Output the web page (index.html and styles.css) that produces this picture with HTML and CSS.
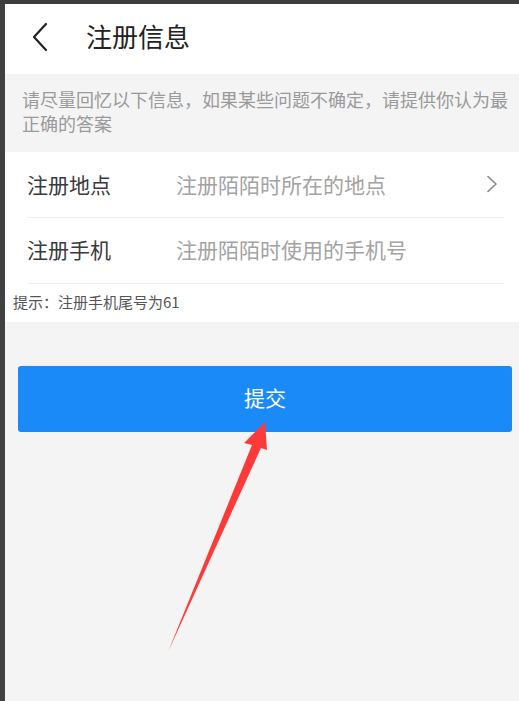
FILE: index.html
```html
<!DOCTYPE html>
<html lang="zh-CN">
<head>
<meta charset="utf-8">
<title>注册信息</title>
<link rel="stylesheet" href="styles.css">
</head>
<body>
<div class="topstrip"></div>
<div class="main">
  <div class="side"></div>
  <div class="screen">
    <header class="header">
      <svg class="back" width="16" height="30" viewBox="0 0 16 30" aria-hidden="true">
        <path d="M14 2 L2 15 L14 28" fill="none" stroke="#222" stroke-width="2.2" stroke-linecap="round" stroke-linejoin="round"/>
      </svg>
      <h1 class="title">注册信息</h1>
    </header>
    <p class="notice">请尽量回忆以下信息，如果某些问题不确定，请提供你认为最正确的答案</p>
    <section class="form">
      <div class="row">
        <span class="label">注册地点</span>
        <span class="placeholder">注册陌陌时所在的地点</span>
        <svg class="chev" width="12" height="18" viewBox="0 0 12 18" aria-hidden="true">
          <path d="M2 1.5 L10 9 L2 16.5" fill="none" stroke="#888" stroke-width="1.6" stroke-linecap="round" stroke-linejoin="round"/>
        </svg>
      </div>
      <div class="row">
        <span class="label">注册手机</span>
        <span class="placeholder">注册陌陌时使用的手机号</span>
      </div>
      <div class="tip">提示：注册手机尾号为61</div>
    </section>
    <div class="actions">
      <button class="submit" type="button">提交</button>
    </div>
  </div>
</div>
<svg class="arrow" width="519" height="701" viewBox="0 0 519 701" aria-hidden="true">
  <polygon points="265,422 244,443 252,445 168,652 261,448 267,450" fill="#fd3a3a"/>
</svg>
</body>
</html>
```

FILE: styles.css
```css
html, body {
  margin: 0;
  padding: 0;
}
body {
  width: 519px;
  height: 701px;
  overflow: hidden;
  background: #f4f4f4;
  font-family: "Noto Sans CJK SC", "Noto Sans", sans-serif;
  position: relative;
}
.topstrip {
  height: 4px;
  background: #3e3e3e;
}
.main {
  display: flex;
  height: 697px;
}
.side {
  width: 5px;
  background: #414141;
  flex: none;
}
.screen {
  flex: 1;
  background: #f4f4f4;
  display: flex;
  flex-direction: column;
}
.header {
  height: 70px;
  box-sizing: border-box;
  background: #fff;
  display: flex;
  align-items: center;
  padding: 0 0 7px 27px;
}
.back {
  display: block;
  flex: none;
  margin-top: 2px;
}
.title {
  margin: 0 0 0 38px;
  font-size: 26px;
  font-weight: 400;
  color: #222;
  line-height: 1;
}
.notice {
  margin: 0;
  padding: 13px 10px 17px 17px;
  font-size: 18px;
  line-height: 24px;
  color: #9a9a9a;
}
.form {
  background: #fff;
  padding-top: 1px;
}
.row {
  display: flex;
  align-items: center;
  height: 66px;
  box-sizing: border-box;
  padding-bottom: 3px;
  margin: 0 15px 0 22px;
  border-bottom: 1px solid #efefef;
}
.row:first-child {
  height: 65px;
}
.label {
  width: 149px;
  flex: none;
  font-size: 21px;
  color: #3a3a3a;
}
.placeholder {
  flex: 1;
  font-size: 21px;
  color: #a3a3a3;
}
.chev {
  display: block;
  margin-right: 6px;
}
.tip {
  height: 38px;
  box-sizing: border-box;
  padding: 0 0 4px 8px;
  display: flex;
  align-items: center;
  font-size: 15px;
  color: #555;
}
.actions {
  padding: 44px 7px 0 13px;
}
.submit {
  display: block;
  width: 100%;
  height: 66px;
  border: none;
  border-radius: 3px;
  background: #1a8af9;
  color: #fff;
  font-family: inherit;
  font-size: 21px;
  padding: 0 0 5px;
}
.arrow {
  position: absolute;
  left: 0;
  top: 0;
  pointer-events: none;
}
```
